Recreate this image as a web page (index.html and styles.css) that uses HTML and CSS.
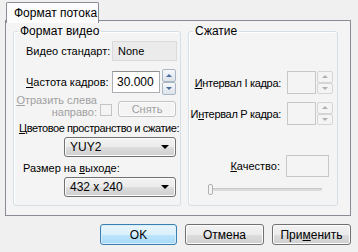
FILE: index.html
```html
<!DOCTYPE html>
<html lang="ru">

<head>
    <meta charset="UTF-8">
    <title>Формат потока</title>
    <link rel="stylesheet" href="styles.css">
</head>

<body>
    <div class="dialog">
        <div class="tabs">
            <div class="tab">Формат потока</div>
        </div>
        <div class="panel">
            <fieldset class="group group-video">
                <legend>Формат видео</legend>
                <div class="row row-std">
                    <span class="lbl">Видео стандарт:</span>
                    <span class="box box-ro">None</span>
                </div>
                <div class="row row-fps">
                    <span class="lbl"><u>Ч</u>астота кадров:</span>
                    <span class="box box-edit">30.000</span>
                    <span class="spin">
                        <span class="spin-btn"><i class="arr up"></i></span>
                        <span class="spin-btn"><i class="arr down"></i></span>
                    </span>
                </div>
                <div class="row row-flip">
                    <span class="lbl lbl-off"><u>О</u>тразить слева<br>направо:</span>
                    <span class="check"></span>
                    <span class="btn btn-off">Снять</span>
                </div>
                <div class="caption caption-color"><u>Ц</u>ветовое пространство и сжатие:</div>
                <div class="combo combo-color">YUY2<i class="drop"></i></div>
                <div class="caption caption-size">Размер на <u>в</u>ыходе:</div>
                <div class="combo combo-size">432 x 240<i class="drop"></i></div>
            </fieldset>
            <fieldset class="group group-comp">
                <legend>Сжатие</legend>
                <div class="row row-i">
                    <span class="lbl"><u>И</u>нтервал I кадра:</span>
                    <span class="box box-off"></span>
                    <span class="spin spin-off">
                        <span class="spin-btn"><i class="arr up"></i></span>
                        <span class="spin-btn"><i class="arr down"></i></span>
                    </span>
                </div>
                <div class="row row-p">
                    <span class="lbl">И<u>н</u>тервал P кадра:</span>
                    <span class="box box-off"></span>
                    <span class="spin spin-off">
                        <span class="spin-btn"><i class="arr up"></i></span>
                        <span class="spin-btn"><i class="arr down"></i></span>
                    </span>
                </div>
                <div class="row row-q">
                    <span class="lbl"><u>К</u>ачество:</span>
                    <span class="box box-q"></span>
                </div>
                <div class="slider">
                    <span class="track"></span>
                    <span class="thumb"></span>
                </div>
            </fieldset>
        </div>
        <div class="buttons">
            <span class="btn btn-default">OK</span>
            <span class="btn btn-wide">Отмена</span>
            <span class="btn btn-wide">При<u>м</u>енить</span>
        </div>
    </div>
</body>

</html>
```

FILE: styles.css
```css
body {
    margin: 0;
    background-color: #f0f0f0;
    font-family: "Liberation Sans", Arial, sans-serif;
    font-size: 11px;
    color: #000;
}

u {
    text-decoration-thickness: 1px;
    text-underline-offset: 1px;
}

.dialog {
    width: 358px;
    height: 252px;
}

.tabs {
    display: flex;
    padding: 2px 0 0 6px;
    height: 20px;
    box-sizing: border-box;
}

.tab {
    width: 93px;
    height: 21px;
    box-sizing: border-box;
    border: 1px solid #898c95;
    border-bottom: none;
    border-radius: 2px 2px 0 0;
    background-color: #fcfcfc;
    padding: 3px 0 0 7px;
    font-size: 12px;
    white-space: nowrap;
    position: relative;
    z-index: 1;
}

.panel {
    display: flex;
    margin: 0 7px 0 5px;
    height: 196px;
    box-sizing: border-box;
    border: 1px solid #898c95;
    background-color: #f4f4f4;
    padding: 4px 0 0 7px;
    gap: 7px;
}

.group {
    margin: 0;
    padding: 0;
    min-width: 0;
    flex: none;
    height: 181px;
    box-sizing: border-box;
    border: 1px solid #d5dfe5;
    border-radius: 3px;
    box-shadow: inset 1px 1px 0 #fff;
}

.group legend {
    padding: 0 2px;
    margin-left: 4px;
    line-height: 13px;
    font-size: 12px;
    white-space: nowrap;
}

.group-video {
    width: 168px;
}

.group-comp {
    width: 150px;
}

.row {
    display: flex;
    align-items: center;
}

.lbl,
.caption {
    white-space: nowrap;
}

.box {
    box-sizing: border-box;
    display: flex;
    align-items: center;
}

.row-std {
    margin-top: 3px;
    padding-left: 12px;
}

.row-std .lbl {
    width: 86px;
}

.box-ro {
    width: 65px;
    height: 20px;
    border: 1px solid #dadada;
    background-color: #ebebeb;
    padding-left: 5px;
}

.row-fps {
    margin-top: 8px;
    padding-left: 12px;
    height: 26px;
}

.row-fps .lbl {
    width: 86px;
}

.box-edit {
    width: 48px;
    height: 22px;
    border: 1px solid #abadb3;
    border-top-color: #8e8f8f;
    background-color: #fff;
    padding-left: 4px;
    font-size: 12px;
}

.spin {
    display: flex;
    flex-direction: column;
    margin-left: 2px;
    width: 14px;
    height: 26px;
}

.spin-btn {
    flex: 1;
    display: flex;
    align-items: center;
    justify-content: center;
    border: 1px solid #a9b6c4;
    border-radius: 2px;
    background: linear-gradient(#f6f8fa, #dde3ea);
}

.arr {
    width: 0;
    height: 0;
    border-left: 3px solid transparent;
    border-right: 3px solid transparent;
}

.arr.up {
    border-bottom: 3px solid #4a6b9c;
}

.arr.down {
    border-top: 3px solid #4a6b9c;
}

.row-flip {
    margin-top: -1px;
    align-items: flex-end;
}

.lbl-off {
    width: 83px;
    text-align: right;
    line-height: 12px;
    color: #a0a0a0;
}

.lbl-off u {
    text-decoration-color: #a0a0a0;
}

.check {
    width: 12px;
    height: 12px;
    box-sizing: border-box;
    margin: 0 0 2px 3px;
    border: 1px solid #c4c4c4;
    background-color: #f4f4f4;
}

.btn {
    display: flex;
    align-items: center;
    justify-content: center;
    box-sizing: border-box;
    border: 1px solid #707070;
    border-radius: 3px;
    background: linear-gradient(#f2f2f2 0%, #ebebeb 50%, #dddddd 51%, #cfcfcf 100%);
    box-shadow: inset 0 0 0 1px #fcfcfc;
    font-size: 12px;
}

.btn-off {
    width: 58px;
    height: 16px;
    margin: 0 0 1px 6px;
    border-color: #c4c4c4;
    background: #f4f4f4;
    color: #a0a0a0;
    font-size: 11px;
}

.caption {
    line-height: 13px;
}

.caption-color {
    margin-top: 4px;
    padding-left: 5px;
    letter-spacing: -0.4px;
}

.caption-size {
    margin-top: 5px;
    padding-left: 9px;
}

.combo {
    display: flex;
    align-items: center;
    position: relative;
    box-sizing: border-box;
    margin: 2px 0 0 50px;
    width: 112px;
    height: 20px;
    padding-left: 5px;
    border: 1px solid #707070;
    border-radius: 3px;
    background: linear-gradient(#f2f2f2 0%, #ebebeb 50%, #dddddd 51%, #cfcfcf 100%);
    box-shadow: inset 0 0 0 1px #fcfcfc;
    font-size: 12px;
}

.drop {
    position: absolute;
    right: 6px;
    top: 7px;
    width: 0;
    height: 0;
    border-left: 4px solid transparent;
    border-right: 4px solid transparent;
    border-top: 4px solid #000;
}

.row-i,
.row-p {
    justify-content: flex-end;
    padding-right: 4px;
}

.row-i {
    margin-top: 33px;
}

.row-p {
    margin-top: 8px;
}

.row-i .lbl,
.row-p .lbl {
    letter-spacing: -0.3px;
}

.row-i .lbl,
.row-p .lbl,
.row-q .lbl {
    margin-right: 6px;
}

.box-off {
    width: 29px;
    height: 23px;
    border: 1px solid #c8c8c8;
    background-color: #f4f4f4;
}

.spin-off {
    width: 16px;
    height: 23px;
    margin-left: 1px;
}

.spin-off .spin-btn {
    border-color: #d5d5d5;
    background: #f4f4f4;
}

.spin-off .arr.up {
    border-bottom-color: #b0b0b0;
}

.spin-off .arr.down {
    border-top-color: #b0b0b0;
}

.row-q {
    justify-content: flex-end;
    padding-right: 8px;
    margin-top: 30px;
}

.box-q {
    width: 43px;
    height: 22px;
    border: 1px solid #c8c8c8;
    background-color: #f4f4f4;
}

.slider {
    position: relative;
    margin: 7px 0 0 19px;
    width: 114px;
    height: 11px;
}

.track {
    position: absolute;
    left: 0;
    right: 0;
    top: 4px;
    height: 2px;
    background-color: #dcdcdc;
    border-top: 1px solid #c8c8c8;
}

.thumb {
    position: absolute;
    left: 0;
    top: 0;
    width: 5px;
    height: 11px;
    box-sizing: border-box;
    border: 1px solid #b0b0b0;
    border-radius: 2px;
    background-color: #f4f4f4;
}

.buttons {
    display: flex;
    justify-content: flex-end;
    gap: 8px;
    padding: 8px 7px 0 0;
}

.buttons .btn {
    height: 21px;
}

.btn-default {
    width: 77px;
    border-color: #3c7fb1;
    background: linear-gradient(#eaf6fd 0%, #d9f0fc 50%, #bee6fd 51%, #a7d9f5 100%);
    box-shadow: inset 0 0 0 1px #d8eefb;
}

.btn-wide {
    width: 79px;
}
```
